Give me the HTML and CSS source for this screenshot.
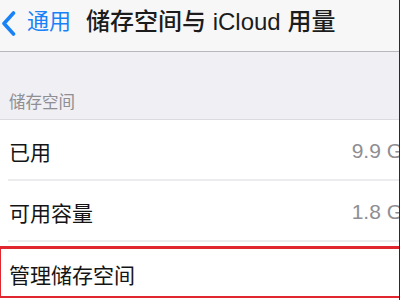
FILE: index.html
```html
<!DOCTYPE html>
<html lang="zh-CN">
<head>
<meta charset="utf-8">
<title>储存空间与 iCloud 用量</title>
<link rel="stylesheet" href="styles.css">
</head>
<body>
<div class="page">
  <header class="nav">
    <a class="back">
      <svg class="chev" width="15" height="25" viewBox="0 0 15 25"><path d="M12.5 2 L3 12.5 L12.5 23" fill="none" stroke="#1a82f7" stroke-width="3.6" stroke-linecap="round" stroke-linejoin="round"/></svg>
      <span class="back-label">通用</span>
    </a>
    <h1 class="title">储存空间与 iCloud 用量</h1>
  </header>
  <div class="group-header">储存空间</div>
  <div class="group">
    <div class="row sep"><span class="label">已用</span><span class="value">9.9 GB</span></div>
    <div class="row sep"><span class="label">可用容量</span><span class="value">1.8 GB</span></div>
    <div class="row last"><span class="label">管理储存空间</span><span class="highlight"></span></div>
  </div>
</div>
</body>
</html>
```
FILE: styles.css
```css
* { box-sizing: border-box; margin: 0; padding: 0; }
html, body { width: 400px; height: 300px; overflow: hidden; background: #fff; }
body { font-family: "Liberation Sans", "Noto Sans CJK SC", sans-serif; }
.page {
  width: 400px; height: 300px; overflow: hidden;
  border-right: 1px solid #2b2b2b;
  display: flex; flex-direction: column;
  background: #efeff4;
}
.nav {
  height: 52px; flex: none;
  background: #f7f7f8;
  border-bottom: 1px solid #b8b8bc;
  display: flex; align-items: flex-start;
  padding-top: 8px;
}
.back { display: flex; align-items: center; color: #1a82f7; padding-left: 1px; }
.chev { display: block; margin-top: 2px; }
.back-label { font-size: 22px; line-height: 28px; margin-left: 11px; }
.title {
  font-size: 24px; line-height: 28px; font-weight: 500; color: #1c1c1c;
  margin-left: 15px;
}
.group-header {
  height: 68px; flex: none;
  padding: 38px 0 0 9px;
  font-size: 16.5px; line-height: 24px; color: #8e8e93;
  border-bottom: 1px solid #dcdce0;
}
.group { background: #fff; flex: 1; }
.row {
  height: 61px; display: flex; align-items: center; position: relative;
  padding-left: 9px;
}
.row.sep::after {
  content: ""; position: absolute; left: 8px; right: 0; bottom: 0;
  height: 2px; background: #ececee;
}
.row.last { height: 56px; padding-top: 8px; }
.label { font-size: 21px; color: #141414; }
.value { margin-left: auto; margin-right: -18px; font-size: 21px; color: #8e8e93; }
.highlight {
  position: absolute; left: 0; right: -2px; top: 4px; bottom: 0;
  border: 1px solid #e0262f; border-top-width: 3px; border-bottom-width: 2px;
}
```
